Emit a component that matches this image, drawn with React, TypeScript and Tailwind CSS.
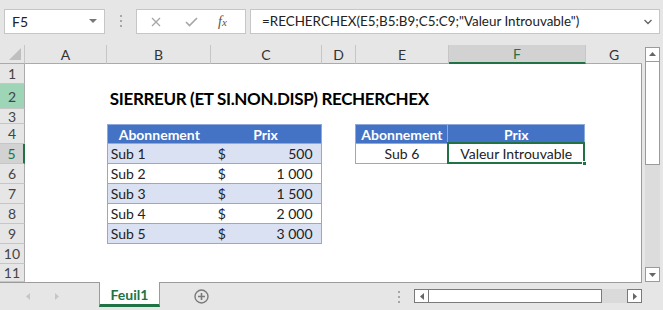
import React from 'react'

const cols = [
  { key: 'A', w: 'w-[82px]' },
  { key: 'B', w: 'w-[104px]' },
  { key: 'C', w: 'w-[111px]' },
  { key: 'D', w: 'w-[34px]' },
  { key: 'E', w: 'w-[93px]' },
  { key: 'F', w: 'w-[137px]' },
  { key: 'G', w: 'w-[56px]' },
]

const rows = [
  { n: 1, h: 'h-[20px]' },
  { n: 2, h: 'h-[25px]' },
  { n: 3, h: 'h-[15px]' },
  { n: 4, h: 'h-[20px]' },
  { n: 5, h: 'h-[20px]' },
  { n: 6, h: 'h-[20px]' },
  { n: 7, h: 'h-[20px]' },
  { n: 8, h: 'h-[20px]' },
  { n: 9, h: 'h-[20px]' },
  { n: 10, h: 'h-[20px]' },
  { n: 11, h: 'h-[18px]' },
]

const subs = [
  { name: 'Sub 1', price: '500' },
  { name: 'Sub 2', price: '1 000' },
  { name: 'Sub 3', price: '1 500' },
  { name: 'Sub 4', price: '2 000' },
  { name: 'Sub 5', price: '3 000' },
]

const tableBorder = 'border-[#8ea9db]'

function Cell({ row, col }: { row: number; col: string }) {
  // table 1 : B4:C9
  if ((col === 'B' || col === 'C') && row >= 4 && row <= 9) {
    const side = col === 'B' ? 'border-l' : 'border-r'
    if (row === 4) {
      return (
        <div className={`flex h-full items-center justify-center border-t border-b ${side} ${tableBorder} bg-[#4472c4] font-bold text-white`}>
          {col === 'B' ? 'Abonnement' : 'Prix'}
        </div>
      )
    }
    const s = subs[row - 5]
    const band = row % 2 === 1 ? 'bg-[#d9e1f2]' : 'bg-white'
    if (col === 'B') {
      return <div className={`flex h-full items-center border-b ${side} ${tableBorder} ${band} pl-[3px]`}>{s.name}</div>
    }
    return (
      <div className={`flex h-full items-center justify-between border-b ${side} ${tableBorder} ${band} pl-[7px] pr-[8px]`}>
        <span>$</span>
        <span>{s.price}</span>
      </div>
    )
  }
  // table 2 : E4:F5
  if ((col === 'E' || col === 'F') && (row === 4 || row === 5)) {
    if (row === 4) {
      return (
        <div
          className={`flex h-full items-center justify-center border-t border-b ${col === 'E' ? 'border-l border-r' : 'border-r'} ${tableBorder} bg-[#4472c4] font-bold text-white`}
        >
          {col === 'E' ? 'Abonnement' : 'Prix'}
        </div>
      )
    }
    if (col === 'E') {
      return <div className={`flex h-full items-center justify-center border-b border-l border-r ${tableBorder} bg-white`}>Sub 6</div>
    }
    return (
      <div className={`relative flex h-full items-center justify-center border-b border-r ${tableBorder} bg-white`}>
        Valeur Introuvable
        <div className="absolute -left-[1px] -top-[2px] -right-[1px] -bottom-[1px] border-2 border-[#217346]" />
        <div className="absolute -right-[3px] -bottom-[3px] h-[5px] w-[5px] border border-white bg-[#217346]" />
      </div>
    )
  }
  if (col === 'B' && row === 2) {
    return (
      <div className="flex h-full items-end overflow-visible whitespace-nowrap pb-[2px] pl-[3px] text-[17px] font-bold leading-none tracking-[-0.35px] text-black">
        SIERREUR (ET SI.NON.DISP) RECHERCHEX
      </div>
    )
  }
  return null
}

function RowHeader({ n }: { n: number }) {
  if (n === 5) {
    return (
      <div className="flex h-full w-[25px] items-center justify-center border-b border-r-2 border-b-[#c6c6c6] border-r-[#217346] bg-[#d2d2d2] text-[#217346]">
        {n}
      </div>
    )
  }
  return (
    <div
      className={`flex h-full w-[25px] items-center justify-center border-b border-r border-b-[#c6c6c6] border-r-[#ababab] ${n === 2 ? 'bg-[#9fd5b7]' : 'bg-[#e6e6e6]'} text-[#444]`}
    >
      {n}
    </div>
  )
}

function Dots({ className }: { className: string }) {
  return (
    <div className={`flex flex-col gap-[3px] ${className}`}>
      <span className="h-[2px] w-[2px] bg-[#a6a6a6]" />
      <span className="h-[2px] w-[2px] bg-[#a6a6a6]" />
      <span className="h-[2px] w-[2px] bg-[#a6a6a6]" />
    </div>
  )
}

export default function App() {
  return (
    <div className="flex h-[310px] w-[663px] flex-col overflow-hidden bg-[#e6e6e6] font-['Lato',sans-serif] text-[14px] text-[#222]">
      {/* formula bar */}
      <div className="flex h-[45px] shrink-0 items-start pt-[9px]">
        <div className="ml-[4px] flex h-[25px] w-[101px] items-center justify-between border border-[#c6c6c6] bg-white pl-[7px] pr-[7px] text-[#222]">
          <span>F5</span>
          <svg width="8" height="5" viewBox="0 0 8 5">
            <path d="M0 0 L8 0 L4 4 Z" fill="#777" />
          </svg>
        </div>
        <Dots className="ml-[15px] mt-[6px]" />
        <div className="ml-[14px] flex h-[25px] w-[110px] items-center border border-[#c6c6c6] bg-white">
          <svg className="ml-[14px]" width="10" height="10" viewBox="0 0 10 10">
            <path d="M1 1 L9 9 M9 1 L1 9" stroke="#a6a6a6" strokeWidth="1.3" />
          </svg>
          <svg className="ml-[24px]" width="13" height="10" viewBox="0 0 13 10">
            <path d="M1 5 L4.5 8.5 L12 1" stroke="#a6a6a6" strokeWidth="1.6" fill="none" />
          </svg>
          <span className="ml-[20px] font-['Liberation_Serif',serif] text-[14px] italic text-[#555]">
            f<span className="text-[11px]">x</span>
          </span>
        </div>
        <div className="ml-[4px] flex h-[25px] w-[410px] items-center justify-between border border-[#c6c6c6] bg-white pl-[11px] pr-[7px] text-[13.4px] text-[#222]">
          <span>=RECHERCHEX(E5;B5:B9;C5:C9;"Valeur Introuvable")</span>
          <svg width="8" height="6" viewBox="0 0 8 6">
            <path d="M0.5 1 L4 4.5 L7.5 1" stroke="#666" strokeWidth="1.4" fill="none" />
          </svg>
        </div>
      </div>

      {/* sheet */}
      <div className="flex h-[237px] shrink-0">
        <div className="flex w-[642px] flex-col">
          {/* column headers */}
          <div className="flex h-[19px] shrink-0">
            <div className="relative w-[25px] border-b border-r border-b-[#ababab] border-r-[#c6c6c6] bg-[#e6e6e6]">
              <svg className="absolute bottom-[3px] right-[3px]" width="12" height="12" viewBox="0 0 12 12">
                <path d="M12 0 L12 12 L0 12 Z" fill="#bfbfbf" />
              </svg>
            </div>
            {cols.map((c) =>
              c.key === 'F' ? (
                <div key={c.key} className={`${c.w} flex items-center justify-center border-b-2 border-r border-b-[#217346] border-r-[#c6c6c6] bg-[#d2d2d2] text-[#217346]`}>
                  {c.key}
                </div>
              ) : (
                <div
                  key={c.key}
                  className={`${c.w} flex items-center justify-center border-b border-b-[#ababab] ${c.key === 'G' ? '' : 'border-r border-r-[#c6c6c6]'} bg-[#e6e6e6] text-[#333]`}
                >
                  {c.key}
                </div>
              ),
            )}
          </div>
          {/* rows */}
          <div className="flex flex-col border-b border-r border-[#9b9b9b] bg-white">
            {rows.map((r) => (
              <div key={r.n} className={`flex ${r.h}`}>
                <RowHeader n={r.n} />
                {cols.map((c) => (
                  <div key={c.key} className={`${c.w} h-full`}>
                    <Cell row={r.n} col={c.key} />
                  </div>
                ))}
              </div>
            ))}
          </div>
        </div>
        {/* vertical scrollbar */}
        <div className="ml-[3px] mt-[2px] flex w-[15px] flex-col">
          <div className="flex h-[15px] items-center justify-center border border-[#9b9b9b] bg-white">
            <svg width="7" height="4" viewBox="0 0 7 4">
              <path d="M0 4 L3.5 0 L7 4 Z" fill="#666" />
            </svg>
          </div>
          <div className="h-[103px] border-x border-b border-[#9b9b9b] bg-white" />
          <div className="h-[103px] bg-[#dcdcdc]" />
          <div className="flex h-[15px] items-center justify-center border border-[#9b9b9b] bg-white">
            <svg width="7" height="4" viewBox="0 0 7 4">
              <path d="M0 0 L7 0 L3.5 4 Z" fill="#666" />
            </svg>
          </div>
        </div>
      </div>

      {/* sheet tabs */}
      <div className="flex h-[28px] shrink-0 items-start">
        <div className="flex h-[28px] w-[99px] items-center gap-[25px] pl-[26px]">
          <svg width="4" height="7" viewBox="0 0 4 7">
            <path d="M4 0 L4 7 L0 3.5 Z" fill="#c6c6c6" />
          </svg>
          <svg width="4" height="7" viewBox="0 0 4 7">
            <path d="M0 0 L0 7 L4 3.5 Z" fill="#c6c6c6" />
          </svg>
        </div>
        <div className="flex h-[25px] w-[61px] items-center justify-center border-x border-b-[3px] border-x-[#9b9b9b] border-b-[#217346] bg-white pt-[2px] font-bold text-[#217346]">
          Feuil1
        </div>
        <div className="ml-[34px] mt-[7px]">
          <svg width="15" height="15" viewBox="0 0 15 15">
            <circle cx="7.5" cy="7.5" r="6.5" stroke="#7a7a7a" strokeWidth="1.4" fill="none" />
            <path d="M7.5 4 L7.5 11 M4 7.5 L11 7.5" stroke="#7a7a7a" strokeWidth="1.6" />
          </svg>
        </div>
        <Dots className="ml-[189px] mt-[9px]" />
        <div className="ml-[14px] mt-[7px] flex h-[14px] w-[228px]">
          <div className="flex w-[15px] items-center justify-center border border-[#7a7a7a] bg-white">
            <svg width="4" height="7" viewBox="0 0 4 7">
              <path d="M4 0 L4 7 L0 3.5 Z" fill="#666" />
            </svg>
          </div>
          <div className="w-[173px] border-y border-r border-[#7a7a7a] bg-white" />
          <div className="w-[25px] bg-[#dadada]" />
          <div className="flex w-[15px] items-center justify-center border border-[#7a7a7a] bg-white">
            <svg width="4" height="7" viewBox="0 0 4 7">
              <path d="M0 0 L0 7 L4 3.5 Z" fill="#666" />
            </svg>
          </div>
        </div>
      </div>
    </div>
  )
}
